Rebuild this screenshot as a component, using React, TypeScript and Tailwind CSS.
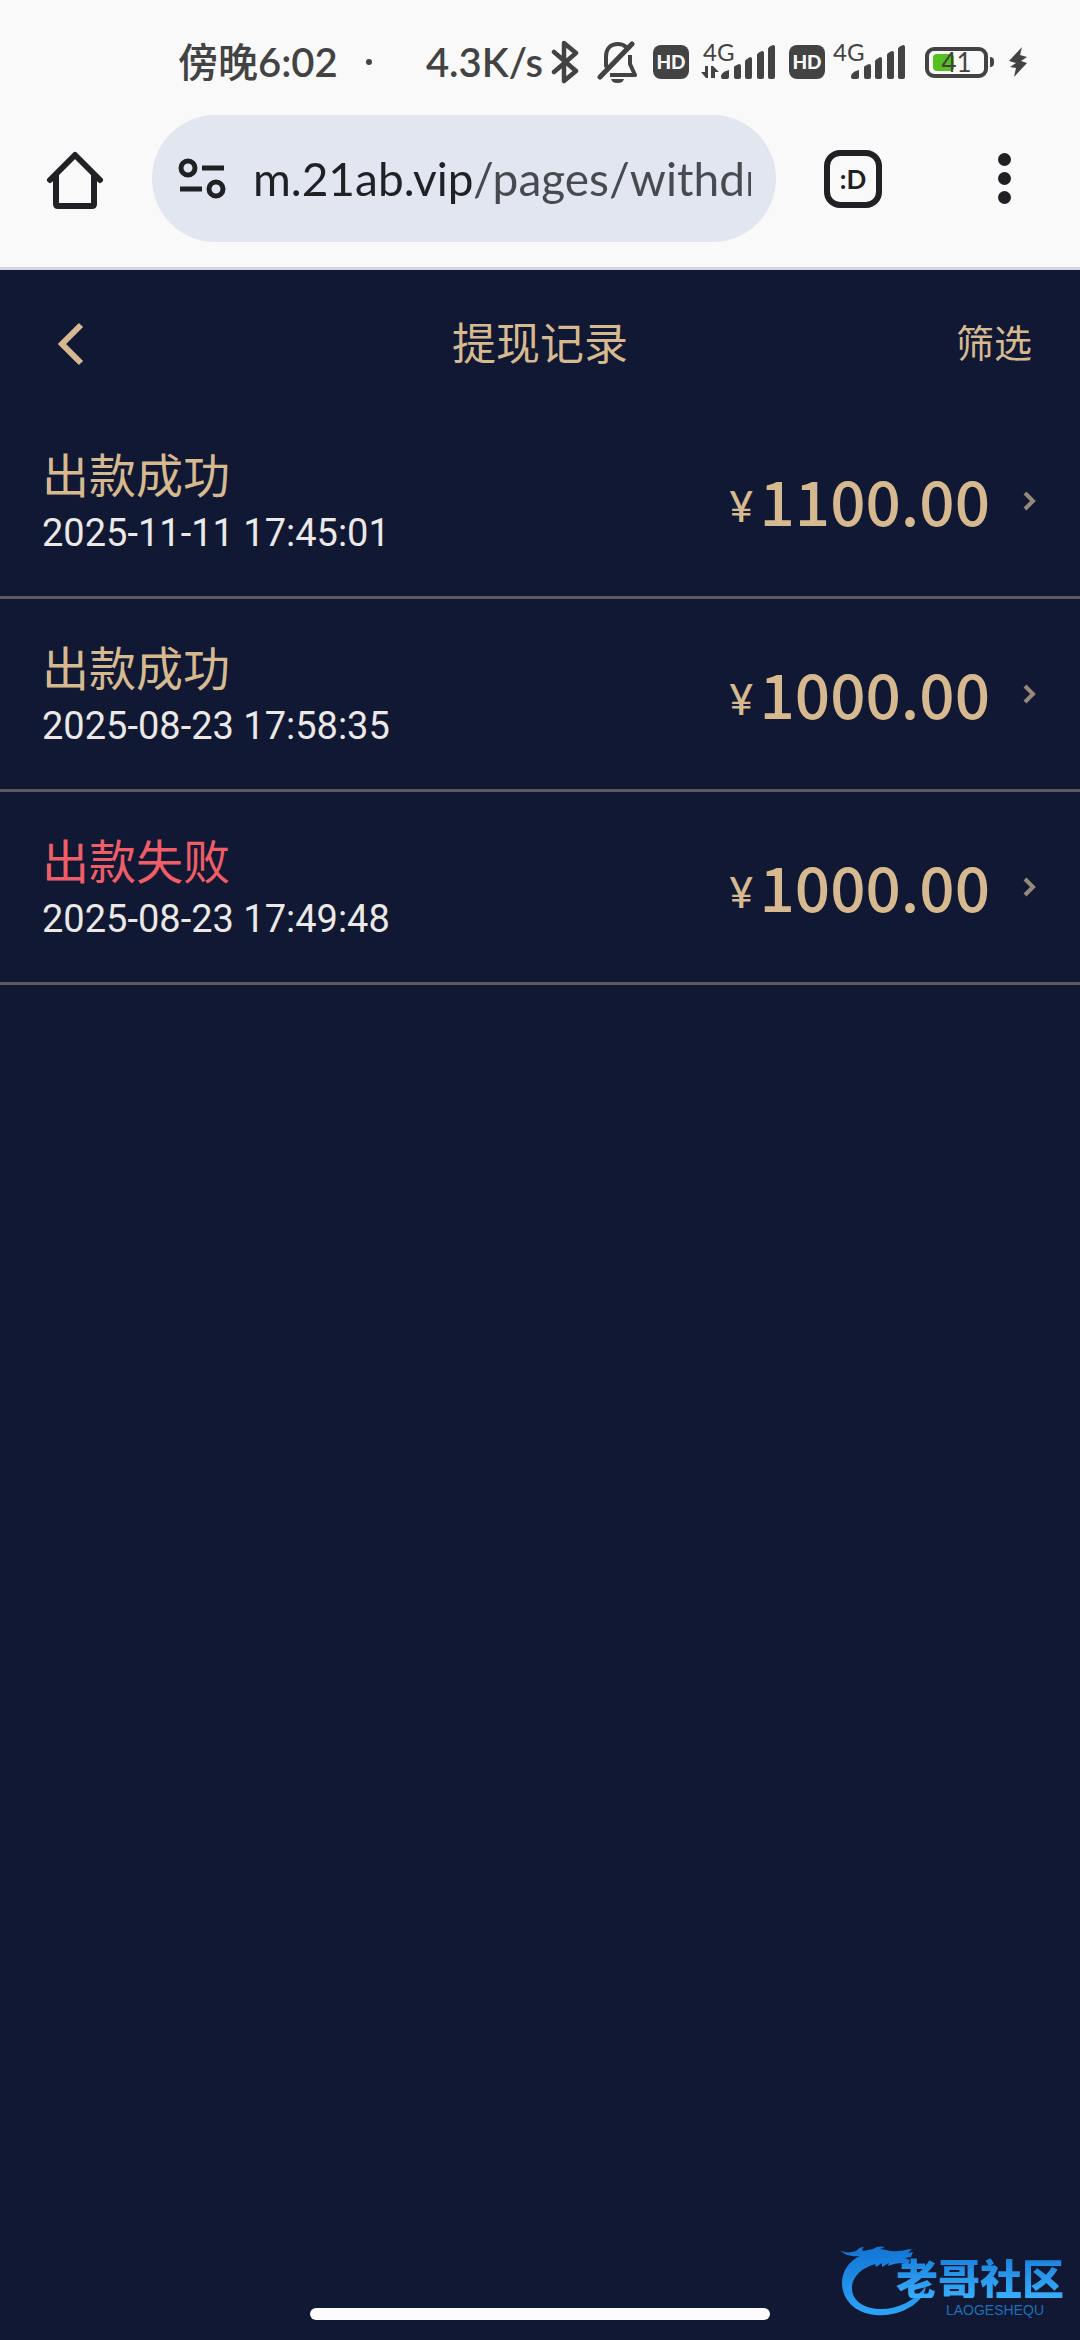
import clsx from "clsx";

type RecordItem = {
  status: "success" | "failed";
  time: string;
  amount: string;
};

const records: RecordItem[] = [
  { status: "success", time: "2025-11-11 17:45:01", amount: "1100.00" },
  { status: "success", time: "2025-08-23 17:58:35", amount: "1000.00" },
  { status: "failed", time: "2025-08-23 17:49:48", amount: "1000.00" },
];

const statusText = {
  success: "出款成功",
  failed: "出款失败",
};

function BluetoothIcon() {
  return (
    <svg width="28" height="44" viewBox="0 0 28 44" fill="none" stroke="currentColor" strokeWidth="4.500" strokeLinecap="round" strokeLinejoin="round">
      <path d="M3 12 25 31 13 41V3l12 10L3 32" />
    </svg>
  );
}

function BellOffIcon() {
  return (
    <svg width="40" height="44" viewBox="0 0 40 44" fill="none" stroke="currentColor" strokeWidth="4" strokeLinecap="round" strokeLinejoin="round">
      <path d="M3 37 35 4" strokeWidth="5" />
      <path d="M9 26V17C9 8 14 4 21 4c4 0 6 1 8 3" />
      <path d="M33 15v9l5 11H13" strokeLinecap="butt" />
      <path d="M14 39h13c-1 3-3 4-6.500 4S15 42 14 39Z" fill="currentColor" stroke="none" />
    </svg>
  );
}

function HdBadge() {
  return (
    <span className="flex h-[34px] w-9 items-center justify-center rounded-lg bg-[#434343] font-[Lato,sans-serif] text-[19px] leading-6 font-black text-[#f9f9f9]">
      HD
    </span>
  );
}

function Signal({ arrows = false }: { arrows?: boolean }) {
  return (
    <span className="relative block h-11 w-[74px]">
      <span className="absolute top-0 left-0.5 font-[Lato,sans-serif] text-2xl leading-6">4G</span>
      <svg className="absolute bottom-1 left-0" width="74" height="36" viewBox="0 0 74 36" fill="currentColor">
        {arrows && <path d="M0 28h4v-6h3v12H5ZM10 34V22h2l6 6h-4v6Z" />}
        <path d="M20 33c0-4 4-6 8-7v7q0 2-2 2h-4q-2 0-2-2Z" />
        <path d="M33 23q0-1 5-3 2 0 2 2v11q0 2-2 2h-3q-2 0-2-2Z" />
        <path d="M44 17q0-1 5-4 2 0 2 2v18q0 2-2 2h-3q-2 0-2-2Z" />
        <path d="M56 11q0-2 5-4 2 0 2 2v24q0 2-2 2h-3q-2 0-2-2Z" />
        <path d="M67 5q0-2 5-4 2 0 2 2v30q0 2-2 2h-3q-2 0-2-2Z" />
      </svg>
    </span>
  );
}

function Battery() {
  return (
    <span className="flex items-center gap-0.5">
      <span className="relative flex h-[31px] w-[63px] items-center justify-center rounded-[9px] border-4 border-[#434343]">
        <span className="absolute top-[3px] left-1 h-[17px] w-[21px] rounded-sm bg-[#56c020]" />
        <span className="relative font-[Lato,sans-serif] text-[26px] leading-6">41</span>
      </span>
      <span className="h-2.5 w-1 rounded-r-sm bg-[#434343]" />
    </span>
  );
}

function StatusBar() {
  return (
    <div className="flex h-[115px] items-start pt-10 pr-[52px] pl-[178px] text-[#434343]">
      <div className="flex h-11 flex-1 items-center font-[Lato,'Noto_Sans_CJK_SC',sans-serif] text-[40px] font-medium">
        <span>
          傍晚<span className="font-semibold">6:02</span>
        </span>
        <span className="ml-7 size-1.5 rounded-full bg-[#434343]" />
      </div>
      <div className="flex h-11 items-center">
        <span className="mr-2 font-[Lato,sans-serif] text-[40px] font-semibold">4.3K/s</span>
        <BluetoothIcon />
        <span className="ml-[18px]">
          <BellOffIcon />
        </span>
        <span className="ml-4">
          <HdBadge />
        </span>
        <span className="ml-3">
          <Signal arrows />
        </span>
        <span className="ml-3.5">
          <HdBadge />
        </span>
        <span className="ml-1.5">
          <Signal />
        </span>
        <span className="ml-5">
          <Battery />
        </span>
        <svg className="ml-3.5" width="20" height="32" viewBox="0 0 20 32" fill="currentColor">
          <path d="M14 1 1 15l7 2-6 4 6 1-2 9 13-14-6-2 6-4-7-2Z" />
        </svg>
      </div>
    </div>
  );
}

function BrowserBar() {
  return (
    <div className="flex items-center pr-11 pb-[25px] pl-[46px] text-[#202124]">
      <button type="button" aria-label="主页" className="shrink-0">
        <svg width="58" height="60" viewBox="0 0 58 60" fill="none" stroke="currentColor" strokeWidth="6" strokeLinecap="round" strokeLinejoin="round">
          <path d="M4 31 29 6l25 25" />
          <path d="M10 27v28q0 2 2 2h34q2 0 2-2V27" />
        </svg>
      </button>
      <div className="ml-12 flex h-[127px] min-w-0 flex-1 items-center rounded-full bg-[#e1e6f0] pr-[25px] pl-[26px]">
        <svg className="shrink-0" width="48" height="42" viewBox="0 0 48 42" fill="none" stroke="currentColor" strokeWidth="5">
          <circle cx="10" cy="10" r="7" />
          <path d="M24 10h22M2 31h22" />
          <circle cx="38" cy="31" r="7" />
        </svg>
        <input
          type="text"
          aria-label="网址"
          readOnly
          value="m.21ab.vip/pages/withdraw"
          className="ml-[27px] min-w-0 flex-1 bg-[linear-gradient(to_right,#202124_218px,#474b50_218px)] bg-clip-text font-[Lato,sans-serif] text-[46px] leading-[60px] text-transparent outline-none"
        />
      </div>
      <button
        type="button"
        aria-label="标签页"
        className="ml-12 flex size-[58px] shrink-0 items-center justify-center rounded-2xl border-6 border-[#202124] font-[Lato,sans-serif] text-[26px] leading-8 font-bold"
      >
        :D
      </button>
      <button type="button" aria-label="更多" className="ml-[90px] flex w-16 shrink-0 flex-col items-center gap-1.5">
        <span className="size-[13px] rounded-full bg-[#202124]" />
        <span className="size-[13px] rounded-full bg-[#202124]" />
        <span className="size-[13px] rounded-full bg-[#202124]" />
      </button>
    </div>
  );
}

function RecordRow({ record }: { record: RecordItem }) {
  return (
    <li className="border-b-3 border-[#5e5961]">
      <a href="#" className="flex h-[190px] items-center justify-between pr-11 pl-[42px]">
        <div className="pt-2">
          <p
            className={clsx(
              "text-[47px] leading-[56px]",
              record.status === "success" ? "text-[#d6b98f]" : "text-[#ef5e67]"
            )}
          >
            {statusText[record.status]}
          </p>
          <p className="font-[Roboto,sans-serif] text-[38px] leading-[64px] text-[#ebe8e6]">{record.time}</p>
        </div>
        <div className="flex items-center text-[#d6b98f]">
          <p className="flex items-end gap-1.5 pb-1">
            <span className="font-[Lato,sans-serif] text-[42px] leading-[66px] font-medium">¥</span>
            <span className="text-[62px] leading-[80px] font-medium">{record.amount}</span>
          </p>
          <svg className="ml-8" width="14" height="20" viewBox="0 0 14 20" fill="none" stroke="#96897c" strokeWidth="4">
            <path d="m3 2 8 8-8 8" />
          </svg>
        </div>
      </a>
    </li>
  );
}

function Watermark() {
  return (
    <div className="absolute right-4 bottom-6 h-[72px] w-[224px]">
      <svg className="absolute top-0 left-0" width="96" height="72" viewBox="0 0 96 72">
        <defs>
          <linearGradient id="dragon" x1="0" y1="0" x2="0" y2="1">
            <stop offset="0" stopColor="#1274d4" />
            <stop offset="1" stopColor="#2ba5f7" />
          </linearGradient>
        </defs>
        <path
          fill="url(#dragon)"
          d="M0 6c6 4 12 2 16 1 2-2 4-4 8-4-2 2-2 3-1 4l10-2c4-3 8-3 12-2l-5 2c8 1 12 3 18 2 5 0 10-2 14-2l-4 4 5-1-2 5-6 1 5 2-2 5c-5-2-9-2-14-1l-6 2 1-3-7 4v-4l-6 4-1-3c-13 4-22 12-23 22-1 13 9 22 27 23 17 1 36-8 47-23-1 14-20 28-42 29C18 73 2 57 2 39 2 27 9 17 20 12 12 13 4 11 0 6Z"
        />
      </svg>
      <span className="absolute top-3 right-0 bg-linear-to-b from-[#1b80dc] to-[#38aefa] bg-clip-text text-[42px] leading-[42px] font-black text-transparent">
        老哥社区
      </span>
      <span className="absolute right-5 bottom-0 font-['Liberation_Sans',sans-serif] text-sm leading-3 text-[#1f6fb5]">
        LAOGESHEQU
      </span>
    </div>
  );
}

export default function App() {
  return (
    <div className="relative flex min-h-screen flex-col bg-[#101834] font-['Noto_Sans_CJK_SC',sans-serif]">
      <header className="border-b-3 border-[#d3d7e3] bg-[#f9f9f9]">
        <StatusBar />
        <BrowserBar />
      </header>

      <main className="flex-1">
        <nav className="grid h-[136px] grid-cols-3 items-center px-12 pt-1.5 text-[#d6b98f]">
          <button type="button" aria-label="返回" className="justify-self-start pt-1.5 pl-2">
            <svg width="28" height="44" viewBox="0 0 28 44" fill="none" stroke="currentColor" strokeWidth="6">
              <path d="M25 3 6 22l19 19" />
            </svg>
          </button>
          <h1 className="justify-self-center text-[44px] leading-[60px]">提现记录</h1>
          <button type="button" className="justify-self-end text-[38px] leading-[60px]">
            筛选
          </button>
        </nav>
        <ul>
          {records.map((record) => (
            <RecordRow key={record.time} record={record} />
          ))}
        </ul>
      </main>

      <div className="mx-auto mb-5 h-3 w-[460px] rounded-full bg-[#fcfcfc]" />
      <Watermark />
    </div>
  );
}
